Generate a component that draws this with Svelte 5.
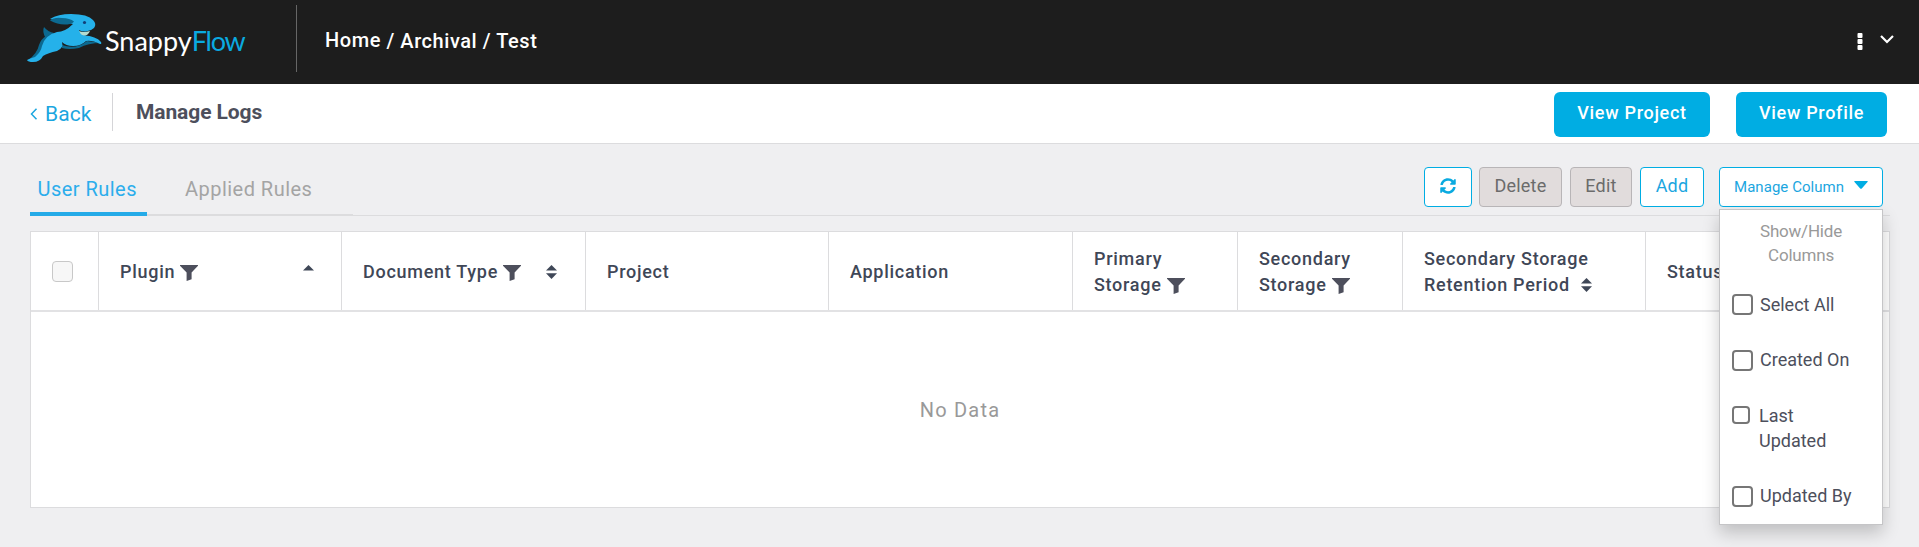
<script>
  const columns = [
    { lines: ['Plugin'], filter: true, sort: 'up' },
    { lines: ['Document Type'], filter: true, sort: 'both' },
    { lines: ['Project'] },
    { lines: ['Application'] },
    { lines: ['Primary', 'Storage'], filter: true },
    { lines: ['Secondary', 'Storage'], filter: true },
    { lines: ['Secondary Storage', 'Retention Period'], sort: 'inline' },
    { lines: ['Status'] }
  ];
  const options = [
    { label: 'Select All' },
    { label: 'Created On' },
    { label: 'Last Updated', small: true },
    { label: 'Updated By' }
  ];
</script>

{#snippet funnel()}
  <svg class="funnel" width="18" height="16" viewBox="0 0 18 16"><path d="M0 0H18V.8L11.6 7.4V14.2L6.6 16V7.4L0 .8Z" fill="#4d4f5c" /></svg>
{/snippet}

{#snippet sorter(kind)}
  <svg class="sort {kind}" width="11" height="14" viewBox="0 0 11 14">
    <path d="M0 5.5L5.5 0L11 5.5Z" fill="#3f4757" />
    {#if kind !== 'up'}<path d="M0 8.3H11L5.5 14Z" fill="#3f4757" />{/if}
  </svg>
{/snippet}

<header class="topbar">
  <div class="brand">
    <svg width="76" height="50" viewBox="0 0 76 50">
      <path d="M18.500 24Q15 17 17 13Q21 18 27 19L24 24Q13 30 15 42Q12 47 5 47L1 46Q10 40 12 31Q14 25 19 22Z" fill="#0c6990" />
      <path d="M35 31Q49 36 60 27L74 29Q61 29 52 34Q42 36 35 34Z" fill="#0c6990" />
      <path d="M52 17Q56 19 63 17Q61 22 56 22L52 21Z" fill="#b5dcd0" />
      <path d="M23 5Q31 0 44 0Q61 0 66 6Q70 10 67 14Q64 17 59 17.500Q55 18 52 16Q53 21 57 21.500Q69 22 74 28Q75 30 73 30Q65 26 59 27Q54 32 46 32Q39 32 35 28Q37 34 30 37Q21 39 16 42Q13 48 6 48Q1 48 0 46Q4 44 8 43Q14 38 15 32Q18 21 30 18Q38 18 46 10Z" fill="#25b1ea" />
      <path d="M23 6.500Q27 3 35 4Q43 4 47 7.500Q46 9 43 10Q33 12 23 6.500Z" fill="#0c6990" />
      <circle cx="57.500" cy="8.500" r="1.600" fill="#123f78" />
    </svg>
    <span class="wordmark">Snappy<b>Flow</b></span>
  </div>
  <nav class="crumbs"><span class="home">Home</span> / Archival / Test</nav>
  <div class="menu">
    <svg width="6" height="18" viewBox="0 0 6 18" fill="#fff"><rect x=".5" y="0" width="5" height="5" rx="1" /><rect x=".5" y="6" width="5" height="5" rx="1" /><rect x=".5" y="12" width="5" height="5" rx="1" /></svg>
    <svg class="chev" width="14" height="9" viewBox="0 0 14 9"><path d="M1 1L7 7L13 1" fill="none" stroke="#fff" stroke-width="2.200" /></svg>
  </div>
</header>

<section class="titlebar">
  <a class="back" href="#back"><svg width="8" height="12" viewBox="0 0 8 12"><path d="M6.500 .8L1.500 6L6.500 11.200" fill="none" stroke="#1ba6df" stroke-width="1.500" /></svg><span>Back</span></a>
  <h1>Manage Logs</h1>
  <button class="primary project">View Project</button>
  <button class="primary profile">View Profile</button>
</section>

<main>
  <div class="toolbar">
    <div class="tabs">
      <div class="tab active">User Rules</div>
      <div class="tab">Applied Rules</div>
    </div>
    <div class="actions">
      <button class="act refresh" aria-label="Refresh">
        <svg width="16" height="16" viewBox="0 0 512 512" fill="#0aaae0"><path d="M370.720 133.280C339.458 104.008 298.888 87.962 255.848 88c-77.458.068-144.328 53.178-162.791 126.850-1.344 5.363-6.122 9.150-11.651 9.150H24.103c-7.498 0-13.194-6.807-11.807-14.176C33.933 94.924 134.813 8 256 8c66.448 0 126.791 26.136 171.315 68.685L463.030 40.970C478.149 25.851 504 36.559 504 57.941V192c0 13.255-10.745 24-24 24H345.941c-21.382 0-32.090-25.851-16.971-40.971l41.750-41.749zM32 296h134.059c21.382 0 32.090 25.851 16.971 40.971l-41.750 41.750c31.262 29.273 71.835 45.319 114.876 45.280 77.418-.070 144.315-53.144 162.787-126.849 1.344-5.363 6.122-9.150 11.651-9.150h57.304c7.498 0 13.194 6.807 11.807 14.176C478.067 417.076 377.187 504 256 504c-66.448 0-126.791-26.136-171.315-68.685L48.970 471.030C33.851 486.149 8 475.441 8 454.059V320c0-13.255 10.745-24 24-24z" /></svg>
      </button>
      <button class="act delete off">Delete</button>
      <button class="act edit off">Edit</button>
      <button class="act add">Add</button>
      <div class="manage">
        <button class="act toggle">Manage Column<svg width="14" height="8" viewBox="0 0 14 8"><path d="M.5 0H13.500Q14 .5 13.500 1L7.800 7.500Q7 8 6.200 7.500L.5 1Q0 .5 .5 0Z" fill="#00ade3" /></svg></button>
        <div class="dropdown">
          <p>Show/Hide<br />Columns</p>
          {#each options as o}
            <label class:small={o.small}><i></i><span>{o.label}</span></label>
          {/each}
        </div>
      </div>
    </div>
  </div>

  <div class="table">
    <div class="head">
      <div class="cell check"><i></i></div>
      {#each columns as c}
        <div class="cell">
          <div class="label">
            {#each c.lines as line, i}
              <div>{line}{#if c.filter && i === c.lines.length - 1}{@render funnel()}{/if}{#if c.sort === 'inline' && i === 1}{@render sorter('inline')}{/if}</div>
            {/each}
          </div>
          {#if c.sort && c.sort !== 'inline'}{@render sorter(c.sort)}{/if}
        </div>
      {/each}
    </div>
    <div class="empty">No Data</div>
  </div>
</main>

<style>
  :global(body) { margin: 0; min-height: 547px; background: #efeff1; font-family: Roboto, sans-serif; }
  :global(#app *) { box-sizing: border-box; }
  button { font-family: inherit; margin: 0; padding: 0; }
  svg { display: block; flex: none; }

  .topbar { height: 84px; background: #1d1d1d; display: flex; align-items: flex-start; }
  .brand { width: 297px; height: 67px; margin-top: 5px; padding: 9px 0 0 27px; display: flex; border-right: 1px solid #666; }
  .wordmark { margin: 11px 0 0 2px; font: 400 27px/32px Lato, sans-serif; color: #fff; letter-spacing: 0; }
  .wordmark b { font-weight: 400; color: #0aaae0; letter-spacing: -1.200px; }
  .crumbs { margin: 29px 0 0 28px; font-size: 20px; line-height: 24px; font-weight: 500; color: #fff; letter-spacing: .56px; }
  .home { position: relative; top: -1px; }
  .menu { margin: 33px 25px 0 auto; display: flex; gap: 17px; }
  .chev { margin-top: 2px; }

  .titlebar { height: 60px; background: #fff; border-bottom: 1px solid #dcdcde; display: flex; align-items: flex-start; }
  .back { width: 83px; height: 38px; margin: 9px 0 0 30px; padding-top: 3px; display: flex; align-items: center; gap: 7px; border-right: 1px solid #d5d5d8; color: #1ba6df; text-decoration: none; font-size: 21px; letter-spacing: .1px; }
  h1 { margin: 15px auto 0 23px; font-size: 21px; line-height: 26px; font-weight: 700; color: #4d4f5c; letter-spacing: -.1px; }
  .primary { height: 45px; margin-top: 8px; padding-bottom: 4px; border: 0; border-radius: 6px; background: #00ade3; color: #fff; font-size: 18px; font-weight: 500; letter-spacing: .7px; }
  .project { width: 156px; margin-right: 26px; }
  .profile { width: 151px; margin-right: 32px; }

  main { padding: 0 29px 0 30px; }
  .toolbar { height: 72px; border-bottom: 1px solid #dcdcde; display: flex; justify-content: space-between; }
  .tabs { display: flex; width: 323px; height: 72px; border-bottom: 2px solid #dcdcde; }
  .tab { height: 72px; padding: 32px 0 0 38px; font-size: 20px; line-height: 26px; color: #a4a4a4; letter-spacing: .47px; }
  .tab.active { width: 117px; padding-left: 7.500px; color: #2badec; border-bottom: 4px solid #25abe8; white-space: nowrap; }
  .actions { display: flex; padding: 23px 7px 0 0; }
  .act { height: 40px; border: 1px solid #00ade3; border-radius: 4px; background: #fff; color: #1ba6df; font-size: 18px; padding-bottom: 3px; letter-spacing: .2px; }
  .refresh { width: 48px; margin-right: 7px; padding: 0 0 2px; display: flex; align-items: center; justify-content: center; }
  .off { background: #e1dcdc; border-color: #b8b5b7; color: #6b6b6b; }
  .delete { width: 83px; margin-right: 8px; }
  .edit { width: 62px; margin-right: 8px; }
  .add { width: 64px; margin-right: 15px; }
  .manage { position: relative; width: 164px; }
  .toggle { width: 164px; display: flex; align-items: center; gap: 10px; padding: 0 0 1px 14px; font-size: 15px; letter-spacing: .05px; }
  .toggle svg { margin-bottom: 3px; }
  .dropdown { position: absolute; z-index: 2; left: 0; top: 42px; width: 164px; height: 316px; padding: 9px 12px 0; background: #fff; border: 1px solid #c5c5c7; box-shadow: 0 8px 16px rgba(0, 0, 0, .2); color: #4d4f5c; font-size: 18px; line-height: 25px; }
  p { margin: 0 0 24px; font-size: 17px; line-height: 24px; text-align: center; color: #999; letter-spacing: -.2px; }
  label { display: flex; align-items: flex-start; margin-bottom: 30px; gap: 7px; line-height: 26px; }
  label i { flex: none; width: 21px; height: 21px; margin-top: 3px; border: 2px solid #767676; border-radius: 4px; }
  label.small { gap: 9px; line-height: 25px; }
  label.small i { width: 18px; height: 18px; }
  label.small span { width: 80px; }
  label:first-of-type span { position: relative; top: 1px; }

  .table { height: 277px; margin-top: 15px; width: 1860px; background: #fff; border: 1px solid #dcdcde; }
  .head { height: 80px; display: grid; grid-template-columns: 68px 243px 244px 243px 244px 165px 165px 243px 1fr; border-bottom: 2px solid #e2e2e4; }
  .cell { display: flex; align-items: center; padding: 2px 0 0 21px; border-right: 1px solid #dcdcde; color: #3f4757; font-size: 18px; line-height: 26px; font-weight: 500; letter-spacing: .72px; white-space: nowrap; }
  .cell:last-child { border-right: 0; }
  .label > div { display: flex; align-items: center; }
  .check { padding-top: 0; }
  .check i { width: 21px; height: 21px; border: 1px solid #c8c8c8; border-radius: 4px; background: #f7f7f7; }
  .funnel { margin: 2px 0 0 5px; }
  .sort { margin: 0 28px 0 auto; }
  .sort.up { margin-right: 27px; }
  .sort.inline { margin: 0 0 0 11px; }
  .empty { height: 195px; display: flex; align-items: center; justify-content: center; font-size: 20px; color: #999; letter-spacing: 1.200px; }
</style>
